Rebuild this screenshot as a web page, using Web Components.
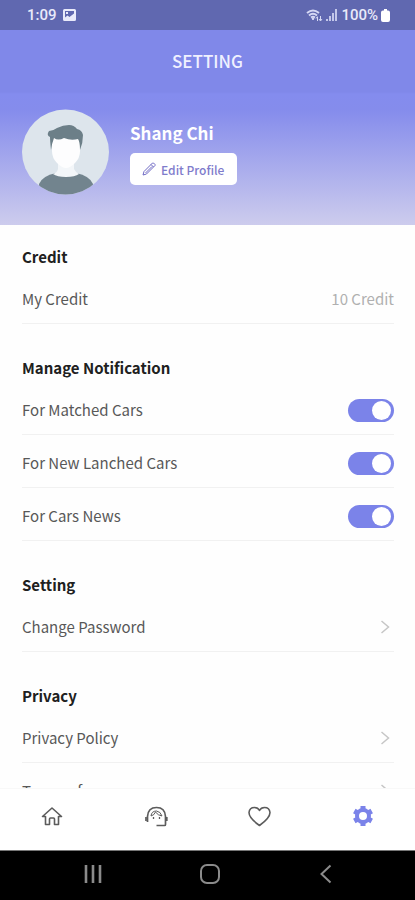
<!DOCTYPE html>
<html lang="en">
<head>
<meta charset="utf-8">
<meta name="viewport" content="width=device-width, initial-scale=1">
<title>Setting</title>
<style>
	html, body {
		margin: 0;
		height: 100%;
	}
	body {
		--accent: #7b83e9;
		--line: #f1f1f1;
		font-family: "Noto Sans CJK KR", "Noto Sans", sans-serif;
		font-size: 15px;
		line-height: 24px;
		color: #585858;
		background: #fefefe;
	}
</style>
</head>
<body>
<settings-app></settings-app>

<script>
(function () {
	function define(name, html, setup) {
		let template = document.createElement("template");
		template.innerHTML = html;

		customElements.define(name, class extends HTMLElement {
			constructor() {
				super();
				this._shadowRoot = this.attachShadow({ mode: "open" });
				this._shadowRoot.appendChild(template.content.cloneNode(true));
			}

			connectedCallback() {
				if (setup) {
					setup(this, this._shadowRoot);
				}
			}
		});
	}

	define("status-bar", `
		<style>
			:host {
				display: flex;
				justify-content: space-between;
				align-items: center;
				box-sizing: border-box;
				height: 30px;
				padding: 0 25px 0 27px;
				background: #6068b0;
				color: #e9eafa;
				font-family: Roboto, sans-serif;
				font-size: 15px;
				font-weight: 500;
			}
			div { display: flex; align-items: center; gap: 6px; }
			.right { gap: 3px; }
			svg { display: block; }
		</style>
		<div>
			<span>1:09</span>
			<svg width="13" height="12" viewBox="0 0 13 12"><path fill="#e9eafa" fill-rule="evenodd" d="M1.5 0h10A1.500 1.500 0 0 1 13 1.500v9a1.500 1.500 0 0 1-1.500 1.500h-10A1.500 1.500 0 0 1 0 10.500v-9A1.500 1.500 0 0 1 1.500 0zM2 8.500l2.500-2L6.500 8 11 4.500V2H2zM3 3h2v2H3z"/></svg>
		</div>
		<div class="right">
			<svg width="17" height="13" viewBox="0 0 17 13" fill="none" stroke="#d5d8f4">
				<path d="M1 4Q7 -1 13 4M3 6.500Q7 3 11 6.500M5 8.500Q7 7 9 8.500" stroke-width="2"/>
				<path d="M6 9.500h2l-1 1.500z" fill="#d5d8f4"/>
				<path d="M11.500 12V8M10 9.500l1.500-2M14.500 7v4.500M13 10l1.500 2L16 10" stroke-width="1"/>
			</svg>
			<svg width="12" height="12" viewBox="0 0 12 12" fill="#d5d8f4"><path d="M0 10h2v2H0zM3 7h2v5H3zM6 4h2v8H6zM9 0h2v12H9z" opacity=".85"/></svg>
			<span>100%</span>
			<svg width="9" height="13" viewBox="0 0 9 13" fill="#fff"><path d="M3 0h3v1.500h1A2 2 0 0 1 9 3.500V11a2 2 0 0 1-2 2H2a2 2 0 0 1-2-2V3.500a2 2 0 0 1 2-2h1z"/></svg>
		</div>
	`);

	define("user-avatar", `
		<style>
			:host { display: block; width: 87px; height: 86px; flex: none; }
			svg { display: block; }
		</style>
		<svg width="87" height="86" viewBox="0 0 87 86" role="img" aria-label="Profile photo">
			<clipPath id="disc"><ellipse cx="43.500" cy="43" rx="43.500" ry="42.500"/></clipPath>
			<g clip-path="url(#disc)">
				<path fill="#dde5ec" d="M0 0h87v86H0z"/>
				<path fill="#72848e" d="M17 86V75q3-8 17-11h20q14 3 17 11v11z"/>
				<path fill="#f3f6f9" d="M36 52h16v8q2 4 5 5-4 3-13 3t-13-3q4-1 5-5z"/>
				<path fill="#fdfdfe" d="M30 28q13-5 28 0v14q0 7-5 12-5 5-9 5t-9-5q-5-5-5-12z"/>
				<path fill="#6c7f88" d="M29 41q-1-9-1-13-4-2-1-6 4 0 8-3 6-3 12-3 5 0 8 4 5 1 6 6 0 8-3 15 0-8-2-11-7 2-14-1-6 3-10 0-2 5-3 12z"/>
			</g>
		</svg>
	`);

	define("profile-header", `
		<style>
			:host {
				display: block;
				height: 195px;
				background: linear-gradient(#8088e9 0, #8088e9 62px, #848cee 64px, #858cec 80px, #cdcced 100%);
				color: #fff;
			}
			h1 {
				margin: 0;
				font-size: 17px;
				font-weight: 500;
				line-height: 62px;
				text-align: center;
				color: #f0f1ff;
			}
			.profile { display: flex; gap: 21px; padding: 17px 22px 0; }
			h2 { margin: 11px 0 8px; font-size: 17px; font-weight: 700; line-height: 25px; }
			button {
				display: flex;
				align-items: center;
				gap: 5px;
				height: 32px;
				padding: 0 13px 0 12px;
				border: 0;
				border-radius: 5px;
				background: #fff;
				color: #7f7ccc;
				font: 500 12px "Noto Sans CJK KR", sans-serif;
			}
		</style>
		<h1><slot name="title"></slot></h1>
		<div class="profile">
			<user-avatar></user-avatar>
			<div>
				<h2><slot name="name"></slot></h2>
				<button type="button">
					<svg width="14" height="14" viewBox="0 0 14 14" fill="none" stroke="#6f6ac4"><path d="M1 13l1-3.500L10.500 1q.500-.500 1 0L13 2.500q.500.500 0 1L4.500 12zM9 2.500L11.500 5M3.500 11L10 4.500"/></svg>
					<slot name="action"></slot>
				</button>
			</div>
		</div>
	`);

	define("setting-section", `
		<style>
			:host { display: block; padding-top: 32px; }
			:host(:first-of-type) { padding-top: 20px; }
			h2 {
				margin: 0 0 6px;
				font-size: 15px;
				font-weight: 700;
				line-height: 24px;
				color: #202020;
			}
		</style>
		<section>
			<h2><slot name="title"></slot></h2>
			<slot></slot>
		</section>
	`);

	define("setting-row", `
		<style>
			:host {
				display: flex;
				justify-content: space-between;
				align-items: center;
				height: 48px;
				margin-top: 4px;
				border-bottom: 1px solid var(--line);
			}
			::slotted(*) { color: #b0b0b0; }
		</style>
		<span id="label"></span>
		<slot></slot>
	`, function (host, root) {
		root.getElementById("label").textContent = host.getAttribute("label");
	});

	define("toggle-row", `
		<style>
			:host {
				display: block;
				margin-top: 4px;
				border-bottom: 1px solid var(--line);
			}
			label { display: flex; justify-content: space-between; align-items: center; height: 48px; }
			input {
				appearance: none;
				display: flex;
				box-sizing: border-box;
				width: 46px;
				height: 23px;
				margin: 0;
				padding: 2px 3px;
				border-radius: 12px;
				background: #c8c8d0;
			}
			input::before {
				content: "";
				width: 19px;
				height: 19px;
				border-radius: 50%;
				background: #fff;
			}
			input:checked { justify-content: flex-end; background: var(--accent); }
		</style>
		<label><span id="label"></span><input type="checkbox" role="switch" checked></label>
	`, function (host, root) {
		root.getElementById("label").textContent = host.getAttribute("label");
	});

	define("link-row", `
		<style>
			:host {
				display: block;
				margin-top: 4px;
				border-bottom: 1px solid var(--line);
			}
			a {
				display: flex;
				justify-content: space-between;
				align-items: center;
				height: 48px;
				padding-right: 4px;
				color: inherit;
				text-decoration: none;
			}
		</style>
		<a href="#">
			<span id="label"></span>
			<svg width="10" height="14" viewBox="0 0 10 14" fill="none" stroke="#c6c6c6" stroke-width="1.500"><path d="M1.500 1l7 6-7 6"/></svg>
		</a>
	`, function (host, root) {
		root.getElementById("label").textContent = host.getAttribute("label");
	});

	define("tab-bar", `
		<style>
			:host {
				display: block;
				border-top: 1px solid #f8f8f8;
				background: #fff;
			}
			nav { display: flex; height: 61px; }
			a {
				flex: 1;
				display: flex;
				justify-content: center;
				padding-top: 15px;
				color: #5c5c5c;
			}
			a[aria-current] { color: var(--accent); }
			svg { width: 24px; height: 24px; fill: none; stroke: currentColor; stroke-width: 1.600; }
		</style>
		<nav>
			<a href="#" aria-label="Home">
				<svg viewBox="0 0 24 24"><path d="M2.500 12.500L12 4l9.500 8.500H18.500V20.500H14.500V15q0-1-1-1h-3q-1 0-1 1v5.500H5.500V12.500z" stroke-linejoin="round"/></svg>
			</a>
			<a href="#" aria-label="Support">
				<svg viewBox="0 0 24 24">
					<path d="M3.500 18v-5.500Q4 3.500 12.500 3.500t9 9V20.500q0 1-1 1H12.500" stroke-width="1.700"/>
					<path d="M2 13v4M22.800 13v4" stroke-width="1.700"/>
					<path d="M7 12q3.500-1 4.500-4 2.500 3.500 6.500 4-1.500-4.500-5.500-5-5 0-5.500 5z" stroke-width="1"/>
					<path d="M9.500 13v2M15.500 13v2" stroke-width="1.300"/>
				</svg>
			</a>
			<a href="#" aria-label="Favorites">
				<svg viewBox="0 0 24 24"><path d="M12.500 21.500Q2 14 2 8.500 2.500 3.500 7.500 3.500q3.500 0 5 3 1.500-3 5-3 5 0 5.500 5 0 5.500-10.500 13z" stroke-linejoin="round"/></svg>
			</a>
			<a href="#" aria-label="Setting" aria-current="page">
				<svg viewBox="0 0 24 24"><path d="M12 7V2M12 17v5M7.700 9.500L3.300 7M16.300 14.500l4.400 2.500M7.700 14.500L3.300 17M16.300 9.500L20.700 7" stroke-width="5"/><circle cx="12" cy="12" r="6" stroke-width="4"/></svg>
			</a>
		</nav>
	`);

	define("system-nav", `
		<style>
			:host {
				display: flex;
				box-sizing: border-box;
				height: 50px;
				padding: 0 32px 0 36px;
				border-top: 1px solid #777;
				background: #000;
			}
			button {
				flex: 1;
				display: flex;
				justify-content: center;
				padding: 12px 0 0;
				border: 0;
				background: none;
			}
			svg { width: 22px; height: 22px; fill: none; stroke: #8b8b8b; stroke-width: 2; }
		</style>
		<button type="button" aria-label="Recent apps"><svg viewBox="0 0 22 22"><path d="M3 2v18M10 2v18M17 2v18" stroke-width="2.600"/></svg></button>
		<button type="button" aria-label="Home"><svg viewBox="0 0 22 22"><rect x="2" y="2" width="18" height="18" rx="6"/></svg></button>
		<button type="button" aria-label="Back"><svg viewBox="0 0 22 22"><path d="M16.500 2.500L7.500 11l9 8.500"/></svg></button>
	`);

	define("settings-app", `
		<style>
			:host { display: flex; flex-direction: column; height: 100vh; }
			main {
				flex: 1;
				min-height: 0;
				overflow: hidden auto;
				scrollbar-width: none;
				padding: 0 21px 0 22px;
			}
			status-bar, profile-header, tab-bar, system-nav { flex: none; }
		</style>
		<status-bar></status-bar>
		<profile-header>
			<span slot="title">SETTING</span>
			<span slot="name">Shang Chi</span>
			<span slot="action">Edit Profile</span>
		</profile-header>
		<main>
			<setting-section>
				<span slot="title">Credit</span>
				<setting-row label="My Credit"><span>10 Credit</span></setting-row>
			</setting-section>
			<setting-section>
				<span slot="title">Manage Notification</span>
				<toggle-row label="For Matched Cars"></toggle-row>
				<toggle-row label="For New Lanched Cars"></toggle-row>
				<toggle-row label="For Cars News"></toggle-row>
			</setting-section>
			<setting-section>
				<span slot="title">Setting</span>
				<link-row label="Change Password"></link-row>
			</setting-section>
			<setting-section>
				<span slot="title">Privacy</span>
				<link-row label="Privacy Policy"></link-row>
				<link-row label="Terms of use"></link-row>
			</setting-section>
		</main>
		<tab-bar></tab-bar>
		<system-nav></system-nav>
	`);
})();
</script>
</body>
</html>
